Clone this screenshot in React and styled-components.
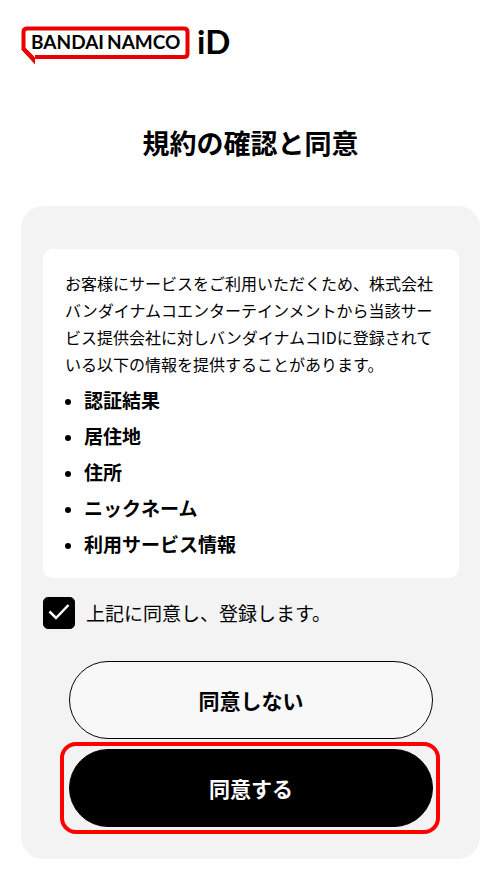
import React, { useState } from "react";
import styled, { createGlobalStyle } from "styled-components";

const GlobalStyle = createGlobalStyle`
  * {
    box-sizing: border-box;
  }

  body {
    margin: 0;
    background-color: #ffffff;
    color: #000000;
    font-family: "Noto Sans CJK JP", sans-serif;
  }
`

const PageWrapper = styled.div`
  display: flex;
  flex-flow: column;
  padding: 16px 22px 36px 21px;
`

const Header = styled.header`
  display: flex;
`

const LogoLink = styled.a`
  display: flex;
  color: #000000;
`

const Title = styled.h1`
  margin: 53px 0 43px;
  font-size: 27px;
  line-height: 40px;
  font-weight: 700;
  text-align: center;
`

const Card = styled.main`
  display: flex;
  flex-flow: column;
  padding: 43px 21px 25px 22px;
  border-radius: 22px;
  background-color: #f3f3f3;
`

const TermsBox = styled.section`
  padding: 21px 22px 16px;
  border-radius: 10px;
  background-color: #ffffff;
`

const TermsText = styled.p`
  margin: 0;
  font-size: 16px;
  line-height: 27px;
`

const TermsList = styled.ul`
  margin: 4px 0 0;
  padding: 0 0 0 19px;
`

const TermsItem = styled.li`
  font-size: 19px;
  line-height: 36px;
  font-weight: 700;

  &::marker {
    font-size: 16px;
  }
`

const AgreeLabel = styled.label`
  display: flex;
  align-items: center;
  gap: 11px;
  margin: 19px 0 32px;
  font-size: 19px;
  line-height: 32px;
  cursor: pointer;
`

const CheckWrapper = styled.span`
  display: grid;
  width: 32px;
  height: 32px;
  flex-shrink: 0;

  > * {
    grid-area: 1 / 1;
  }
`

const Checkbox = styled.input`
  appearance: none;
  width: 32px;
  height: 32px;
  margin: 0;
  border: 1px solid #000000;
  border-radius: 5px;
  background-color: #ffffff;
  cursor: pointer;

  &:checked {
    background-color: #000000;
  }
`

const CheckMark = styled.svg`
  width: 32px;
  height: 32px;
  pointer-events: none;
`

const Button = styled.button`
  height: 78px;
  margin: ${(props) => (props.$primary ? "0" : "0 26px 3px")};
  padding: 0;
  border: 1px solid #000000;
  border-radius: 39px;
  background-color: ${(props) => (props.$primary ? "#000000" : "#f8f8f8")};
  color: ${(props) => (props.$primary ? "#ffffff" : "#000000")};
  font-family: inherit;
  font-size: 21px;
  font-weight: 700;
  cursor: pointer;
`

const Highlight = styled.div`
  display: flex;
  flex-flow: column;
  margin: 0 19px 0 17px;
  padding: 3px 3px 3px 5px;
  border: 4px solid #ff0000;
  border-radius: 16px;
`

const items = ["認証結果", "居住地", "住所", "ニックネーム", "利用サービス情報"]

const Logo = () => {
    return(
        <svg width="230" height="54" viewBox="0 -8 230 54" aria-hidden="true">
            <path
                d="M14 33H163Q166.500 33 166.500 29.500V8Q166.500 4.500 163 4.500H6Q2.500 4.500 2.500 8V25L11 33.500"
                fill="none"
                stroke="#eb0000"
                strokeWidth="4"
            />
            <path d="M0.500 25.500L14 40.500V33.500L4 23.500Z" fill="#eb0000" />
            <g fontFamily="Lato, sans-serif" fontWeight="700">
                <text x="10" y="25" fontSize="19">BANDAI</text>
                <text x="86" y="25" fontSize="19">NAMCO</text>
                <text x="176" y="30" fontSize="33">iD</text>
            </g>
        </svg>
    )
}

const App = () => {
    const [agreed, setAgreed] = useState(true)

    return(
        <>
            <GlobalStyle />
            <PageWrapper>
                <Header>
                    <LogoLink href="#" aria-label="BANDAI NAMCO ID">
                        <Logo />
                    </LogoLink>
                </Header>
                <Title>規約の確認と同意</Title>
                <Card>
                    <TermsBox>
                        <TermsText>
                            お客様にサービスをご利用いただくため、株式会社バンダイナムコエンターテインメントから当該サービス提供会社に対しバンダイナムコIDに登録されている以下の情報を提供することがあります。
                        </TermsText>
                        <TermsList>
                            {items.map((item) => (
                                <TermsItem key={item}>{item}</TermsItem>
                            ))}
                        </TermsList>
                    </TermsBox>
                    <AgreeLabel htmlFor="agree">
                        <CheckWrapper>
                            <Checkbox
                                id="agree"
                                type="checkbox"
                                checked={agreed}
                                onChange={(e) => setAgreed(e.target.checked)}
                            />
                            <CheckMark viewBox="0 0 32 32">
                                <path d="M6.500 14.500L13 21L25.500 8" fill="none" stroke="#ffffff" strokeWidth="2.500" />
                            </CheckMark>
                        </CheckWrapper>
                        上記に同意し、登録します。
                    </AgreeLabel>
                    <Button type="button">同意しない</Button>
                    <Highlight>
                        <Button type="button" $primary>同意する</Button>
                    </Highlight>
                </Card>
            </PageWrapper>
        </>
    )
}

export default App
